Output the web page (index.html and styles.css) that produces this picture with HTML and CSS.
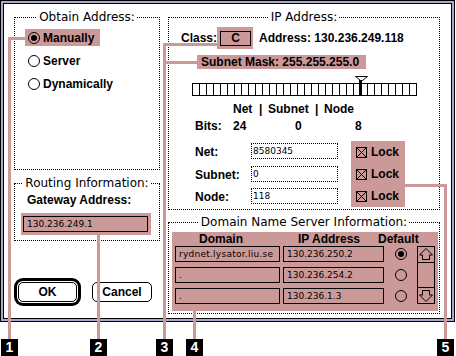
FILE: index.html
```html
<!DOCTYPE html>
<html>
<head>
<meta charset="utf-8">
<title>TCP/IP</title>
<link rel="stylesheet" href="styles.css">
</head>
<body>
<div class="screen">
  <div class="window">
    <div class="window-inner">
      <div class="col col-left">
        <div class="group group-obtain">
          <div class="group-title">Obtain Address:</div>
          <div class="radio-list">
            <div class="radio-row hl"><span class="radio on"></span><span>Manually</span></div>
            <div class="radio-row"><span class="radio"></span><span>Server</span></div>
            <div class="radio-row"><span class="radio"></span><span>Dynamically</span></div>
          </div>
        </div>
        <div class="group group-routing">
          <div class="group-title">Routing Information:</div>
          <div class="gateway-label">Gateway Address:</div>
          <div class="hl field-wrap"><div class="field solid gateway-field">130.236.249.1</div></div>
        </div>
        <div class="buttons">
          <div class="btn btn-default btn-ok">OK</div>
          <div class="btn btn-cancel">Cancel</div>
        </div>
      </div>

      <div class="col col-right">
        <div class="group group-ip">
          <div class="group-title">IP Address:</div>
          <div class="class-row">
            <span class="class-label">Class:</span>
            <span class="hl class-pop"><span class="class-box">C</span></span>
            <span class="address">Address: 130.236.249.118</span>
          </div>
          <div class="hl subnet">Subnet Mask: 255.255.255.0</div>
          <svg class="bitbar" width="228" height="22" viewBox="0 0 228 22">
            <rect x="0.5" y="8.5" width="224" height="12" fill="none" stroke="#000"/>
            <path d="M7.5 8v13M14.5 8v13M21.5 8v13M28.5 8v13M35.5 8v13M42.5 8v13M49.5 8v13M56.5 8v13M63.5 8v13M70.5 8v13M77.5 8v13M84.5 8v13M91.5 8v13M98.5 8v13M105.5 8v13M112.5 8v13M119.5 8v13M126.5 8v13M133.5 8v13M140.5 8v13M147.5 8v13M154.5 8v13M161.5 8v13M175.5 8v13M182.5 8v13M189.5 8v13M196.5 8v13M203.5 8v13M210.5 8v13M217.5 8v13" stroke="#000"/>
            <rect x="167" y="5" width="3" height="16" fill="#000"/>
            <path d="M163.5 1.5H175.5L170.5 5.5H168.5Z" fill="#fff" stroke="#000"/>
          </svg>
          <div class="bits-head">
            <span>Net</span><span>|</span><span>Subnet</span><span>|</span><span>Node</span>
          </div>
          <div class="bits-row">
            <span>Bits:</span><span>24</span><span>0</span><span>8</span>
          </div>
          <div class="fields-area">
            <div class="fields-grid">
              <span class="flabel">Net:</span><div class="field dotted">8580345</div>
              <span class="flabel">Subnet:</span><div class="field dotted">0</div>
              <span class="flabel">Node:</span><div class="field dotted">118</div>
            </div>
            <div class="hl locks">
              <div class="lock-row"><svg class="cb" width="11" height="11" viewBox="0 0 11 11"><rect x="0.5" y="0.5" width="10" height="10" fill="none" stroke="#000"/><path d="M1 1L10 10M10 1L1 10" stroke="#000"/></svg><span>Lock</span></div>
              <div class="lock-row"><svg class="cb" width="11" height="11" viewBox="0 0 11 11"><rect x="0.5" y="0.5" width="10" height="10" fill="none" stroke="#000"/><path d="M1 1L10 10M10 1L1 10" stroke="#000"/></svg><span>Lock</span></div>
              <div class="lock-row"><svg class="cb" width="11" height="11" viewBox="0 0 11 11"><rect x="0.5" y="0.5" width="10" height="10" fill="none" stroke="#000"/><path d="M1 1L10 10M10 1L1 10" stroke="#000"/></svg><span>Lock</span></div>
            </div>
          </div>
        </div>

        <div class="group group-dns">
          <div class="group-title">Domain Name Server Information:</div>
          <div class="hl dns-table">
            <div class="dns-head"><span>Domain</span><span>IP Address</span><span>Default</span></div>
            <div class="dns-rows">
              <div class="field solid dom">rydnet.lysator.liu.se</div>
              <div class="field solid ip">130.236.250.2</div>
              <div class="rcell"><span class="radio on"></span></div>
              <svg class="scroll" width="18" height="58" viewBox="0 0 18 58">
                <rect x="0.5" y="0.5" width="17" height="57" fill="none" stroke="#000"/>
                <path d="M0 16.5H18M0 41.5H18" stroke="#000"/>
                <path d="M9 2.5L15.5 9H12.5V13.5H5.5V9H2.5Z" fill="none" stroke="#000" stroke-linejoin="miter"/>
                <path d="M9 55.5L15.5 49H12.5V44.5H5.5V49H2.5Z" fill="none" stroke="#000" stroke-linejoin="miter"/>
              </svg>
              <div class="field solid dom">.</div>
              <div class="field solid ip">130.236.254.2</div>
              <div class="rcell"><span class="radio"></span></div>
              <div class="field solid dom">.</div>
              <div class="field solid ip">130.236.1.3</div>
              <div class="rcell"><span class="radio"></span></div>
            </div>
          </div>
        </div>
      </div>
    </div>
  </div>

  <svg class="callouts" width="456" height="356" viewBox="0 0 456 356">
    <g fill="#cc9999">
      <rect x="8" y="37" width="17" height="3"/>
      <rect x="8" y="37" width="3" height="303"/>
      <rect x="97" y="235" width="3" height="105"/>
      <rect x="163" y="43" width="54" height="3"/>
      <rect x="163" y="61" width="34" height="3"/>
      <rect x="163" y="43" width="3" height="297"/>
      <rect x="193" y="310" width="3" height="30"/>
      <rect x="404" y="184" width="43" height="3"/>
      <rect x="444" y="184" width="3" height="156"/>
    </g>
  </svg>
  <div class="num n1">1</div>
  <div class="num n2">2</div>
  <div class="num n3">3</div>
  <div class="num n4">4</div>
  <div class="num n5">5</div>
</div>
</body>
</html>
```

FILE: styles.css
```css
* { box-sizing: border-box; }
html, body { margin: 0; padding: 0; background: #fff; }
body {
  font: 700 12px/14px "Liberation Sans", Arial, sans-serif;
  color: #000;
}
.screen { position: relative; width: 456px; height: 356px; overflow: hidden; }

.window {
  width: 455px;
  height: 322px;
  border: 1px solid #000;
  background: #a9a9cf;
  padding: 2px;
}
.window-inner {
  height: 100%;
  border: 1px solid #000;
  background: #fff;
  display: flex;
  align-items: flex-start;
  gap: 8px;
  padding: 13px 0 0 10px;
}
.col { display: flex; flex-direction: column; align-items: flex-start; }
.col-left { width: 146px; }
.col-right { width: 272px; }

.hl { background: #cc9999; }

.group { border: 1px dotted #000; width: 100%; }
.group-title {
  width: fit-content;
  margin: -8px auto 0;
  padding: 0 2px;
  background: #fff;
  font: 400 12px/14px "DejaVu Sans", sans-serif;
}

/* Obtain address */
.group-obtain { height: 153px; }
.radio-list {
  display: flex;
  flex-direction: column;
  align-items: flex-start;
  gap: 6px;
  padding: 5px 0 0 10px;
}
.radio-row {
  display: flex;
  align-items: center;
  height: 17px;
  gap: 3px;
  padding: 0 6px 0 3px;
}
.radio {
  width: 12px;
  height: 12px;
  border: 1px solid #000;
  border-radius: 50%;
  display: flex;
  align-items: center;
  justify-content: center;
  flex: none;
}
.radio.on::after {
  content: "";
  width: 6px;
  height: 6px;
  border-radius: 50%;
  background: #000;
}

/* Routing */
.group-routing { height: 58px; margin-top: 13px; }
.gateway-label { margin: 3px 0 0 12px; }
.field-wrap { width: fit-content; margin: 6px 0 0 6px; padding: 3px 3px 3px 2px; }
.field {
  height: 16px;
  font: 400 9px/14px "DejaVu Sans", sans-serif;
  padding-left: 3px;
  white-space: nowrap;
  overflow: hidden;
}
.field.solid { border: 1px solid #000; }
.field.dotted { border: 1px dotted #000; padding-left: 1px; }
.gateway-field { width: 125px; }

/* Buttons */
.buttons { display: flex; gap: 15px; margin-top: 41px; padding-left: 4px; }
.btn {
  height: 20px;
  border: 1px solid #000;
  border-radius: 5px;
  text-align: center;
  line-height: 18px;
  background: #fff;
}
.btn-default { box-shadow: 0 0 0 1px #fff, 0 0 0 4px #000; }
.btn-ok { width: 59px; }
.btn-cancel { width: 60px; }

/* IP group */
.group-ip { height: 193px; }
.class-row {
  display: flex;
  align-items: center;
  height: 22px;
  margin-top: 3px;
  padding-left: 12px;
}
.class-label { width: 36px; }
.class-pop {
  width: 36px;
  height: 22px;
  display: flex;
  align-items: center;
  justify-content: center;
  padding-left: 1px;
}
.class-box {
  width: 31px;
  height: 15px;
  border: 1px solid #000;
  text-align: center;
  line-height: 13px;
}
.address { margin-left: 6px; }
.subnet {
  width: fit-content;
  margin: 6px 0 0 28px;
  padding: 0 7px 0 4px;
}
.bitbar { display: block; margin: 6px 0 0 23px; }
.bits-head {
  display: grid;
  grid-template-columns: 26px 9px 47px 9px auto;
  margin: 5px 0 0 64px;
}
.bits-row {
  display: grid;
  grid-template-columns: 38px 62px 60px auto;
  margin: 3px 0 0 26px;
}
.fields-area { display: flex; align-items: flex-start; margin-top: 8px; }
.fields-grid {
  display: grid;
  grid-template-columns: 56px 87px;
  grid-auto-rows: 16px;
  row-gap: 6.5px;
  margin: 2px 0 0 26px;
}
.flabel { line-height: 16px; padding-top: 1px; }
.locks {
  width: 54px;
  margin-left: 13px;
  padding-left: 5px;
}
.lock-row {
  display: flex;
  align-items: center;
  gap: 4px;
  height: 22px;
}
.cb { display: block; flex: none; }

/* DNS */
.group-dns { height: 92px; margin-top: 12px; }
.dns-table {
  width: 266px;
  height: 79px;
  margin: 3px 0 0 3px;
  padding: 0 3px;
}
.dns-head {
  display: grid;
  grid-template-columns: 99px 80px auto;
  padding-left: 24px;
}
.dns-rows {
  display: grid;
  grid-template-columns: 108px 101px 33px 18px;
  grid-template-rows: 16px 16px 16px;
  row-gap: 5px;
}
.dom { width: 105px; letter-spacing: 0.25px; }
.ip { width: 101px; }
.rcell { display: flex; align-items: center; justify-content: center; }
.scroll { grid-column: 4; grid-row: 1 / 4; display: block; }

/* Callouts */
.callouts { position: absolute; left: 0; top: 0; pointer-events: none; }
.num {
  position: absolute;
  top: 339px;
  width: 17px;
  height: 17px;
  background: #000;
  color: #fff;
  font: 700 14px/17px "Liberation Sans", Arial, sans-serif;
  text-align: center;
}
.n1 { left: 1px; }
.n2 { left: 90px; }
.n3 { left: 156px; }
.n4 { left: 186px; }
.n5 { left: 437px; }
```
